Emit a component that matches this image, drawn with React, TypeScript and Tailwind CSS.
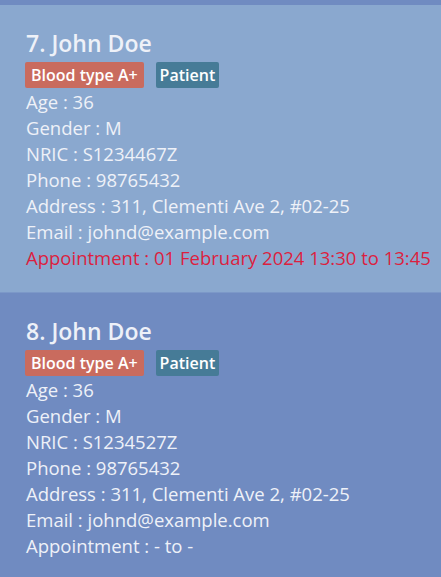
import React from "react";

type P = { idx: number; nric: string; appt: string; highlight: boolean; bg: string };

const people: P[] = [
  { idx: 7, nric: "S1234467Z", appt: "01 February 2024 13:30 to 13:45", highlight: true, bg: "bg-[#8aa8cf]" },
  { idx: 8, nric: "S1234527Z", appt: "- to -", highlight: false, bg: "bg-[#708bc1]" },
];

function Card({ p }: { p: P }) {
  return (
    <div className={`${p.bg} h-[287px] pl-[26px] pt-[23px] text-[#eef1f8]`}>
      <div className="text-[23px] font-semibold leading-[30px]">{p.idx}. John Doe</div>
      <div className="flex gap-[12px] mt-[4px] mb-[1px]">
        <span className="bg-[#c96b5e] text-white text-[16px] font-semibold leading-[26px] px-[6px] rounded-[2px] -ml-px">Blood type A+</span>
        <span className="bg-[#467b97] text-white text-[16px] font-semibold leading-[26px] px-[4px] rounded-[2px]">Patient</span>
      </div>
      <div className="text-[18.5px] leading-[26px]">
        <div>Age : 36</div>
        <div>Gender : M</div>
        <div>NRIC : {p.nric}</div>
        <div>Phone : 98765432</div>
        <div>Address : 311, Clementi Ave 2, #02-25</div>
        <div>Email : johnd@example.com</div>
        <div className={p.highlight ? "text-[#dc1f3f]" : ""}>Appointment : {p.appt}</div>
      </div>
    </div>
  );
}

export default function App() {
  return (
    <div className="w-[441px] h-[577px] overflow-hidden bg-[#708bc1]" style={{ fontFamily: '"Open Sans", "Noto Sans", sans-serif' }}>
      <div className="h-[5px] bg-[#708bc1]" />
      <Card p={people[0]} />
      <div className="h-[1px] bg-[#7c98c8]" />
      <Card p={people[1]} />
    </div>
  );
}
